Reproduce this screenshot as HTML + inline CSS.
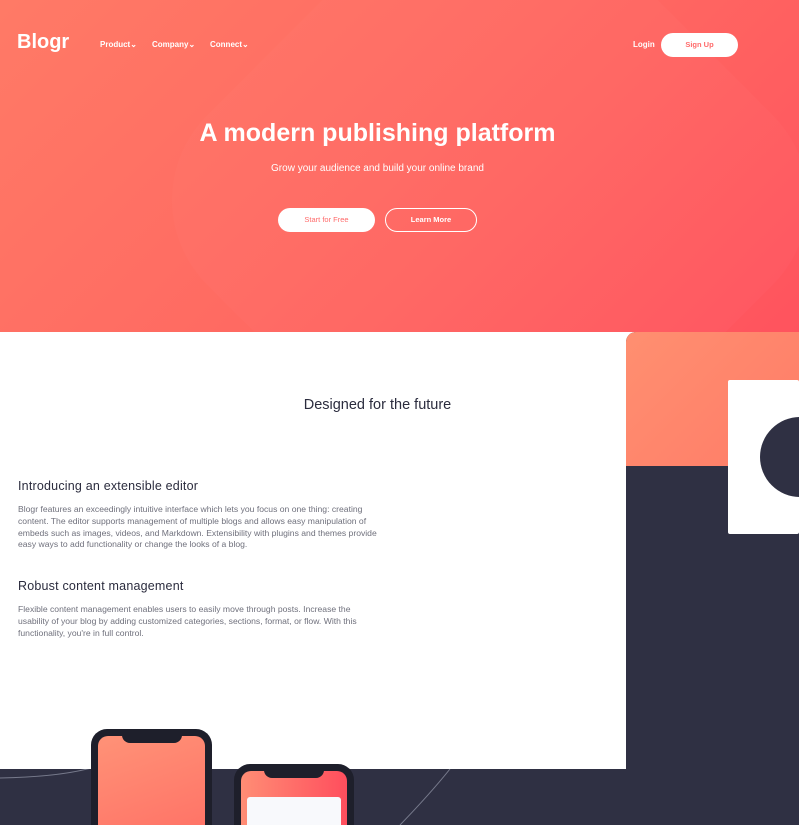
<!DOCTYPE html>
<html><head><meta charset="utf-8"><style>
*{margin:0;padding:0;box-sizing:border-box}
html{width:799px;height:825px;overflow:hidden}
body{width:799px;height:825px;overflow:hidden;position:relative;font-family:"Liberation Sans",sans-serif;background:#fff}
.hero{position:absolute;left:0;top:0;width:799px;height:332px;background:linear-gradient(135deg,#ff7a66 0%,#ff6a62 50%,#ff535e 100%);overflow:hidden}
.hero:before{content:"";position:absolute;left:230px;top:-60px;width:520px;height:520px;border-radius:120px;background:rgba(255,255,255,0.02);transform:rotate(45deg)}
.w{position:absolute;color:#fff;font-weight:bold}
.nav{font-size:8px}
.btn{position:absolute;border-radius:14px;font-size:7.5px;font-weight:bold;text-align:center}
.panel{position:absolute;left:626px;top:332px;width:173px;height:437px;border-top-left-radius:10px;overflow:hidden;background:#2f3043}
.panel .o{position:absolute;left:0;top:0;width:173px;height:134px;background:linear-gradient(135deg,#ff8f70,#ff7c68)}
.card{position:absolute;left:728px;top:380px;width:71px;height:154px;background:#fff;border-radius:2px;overflow:hidden}
.card div{position:absolute;left:32px;top:37px;width:80px;height:80px;border-radius:50%;background:#2f3043}
.bottom{position:absolute;left:0;top:769px;width:799px;height:56px;background:#2f3043}
h3{position:absolute;left:18px;font-size:12.5px;color:#2b2c3e;font-weight:normal;letter-spacing:.2px}
p{position:absolute;left:18px;width:362px;font-size:8.6px;line-height:11.8px;color:#6f707c}
.ph{position:absolute;background:#1e1f2b;border-radius:16px;overflow:hidden}
.ph .s{position:absolute;left:7px;top:7px;right:7px;bottom:-20px;border-radius:10px}
.ph .n{position:absolute;top:6px;width:60px;height:8px;background:#1e1f2b;border-radius:0 0 8px 8px}
.clip{position:absolute;left:0;top:0;width:799px;height:825px;overflow:hidden}
</style></head><body><div class="clip">
<div class="hero">
<div class="w" style="left:17px;top:31px;font-size:20px">Blogr</div>
<div class="w nav" style="left:100px;top:40px">Product⌄</div>
<div class="w nav" style="left:152px;top:40px">Company⌄</div>
<div class="w nav" style="left:210px;top:40px">Connect⌄</div>
<div class="w nav" style="left:633px;top:40px">Login</div>
<div class="btn" style="left:661px;top:33px;width:77px;height:24px;line-height:24px;background:#fff;color:#ff6b6b">Sign Up</div>
<div class="w" style="left:0;width:755px;text-align:center;top:119px;font-size:25px">A modern publishing platform</div>
<div class="w" style="left:0;width:755px;text-align:center;top:163px;font-size:10px;font-weight:normal">Grow your audience and build your online brand</div>
<div class="btn" style="left:278px;top:208px;width:97px;height:24px;line-height:24px;background:#fff;color:#ff6b6b;font-weight:normal">Start for Free</div>
<div class="btn" style="left:385px;top:208px;width:92px;height:24px;line-height:22px;border:1px solid #fff;color:#fff">Learn More</div>
</div>
<div class="panel"><div class="o"></div></div>
<div class="card"><div></div></div>
<div class="bottom"><svg width="799" height="56" style="position:absolute;left:0;top:0"><path d="M0 9 Q60 8 95 -2" stroke="#777a8c" stroke-width="1" fill="none"/><path d="M400 56 Q430 25 450 0" stroke="#777a8c" stroke-width="1" fill="none"/></svg></div>
<div style="position:absolute;left:0;top:397px;width:755px;text-align:center;font-size:14.5px;color:#2b2c3e">Designed for the future</div>
<h3 style="top:479px">Introducing an extensible editor</h3>
<p style="top:504px">Blogr features an exceedingly intuitive interface which lets you focus on one thing: creating content. The editor supports management of multiple blogs and allows easy manipulation of embeds such as images, videos, and Markdown. Extensibility with plugins and themes provide easy ways to add functionality or change the looks of a blog.</p>
<h3 style="top:579px">Robust content management</h3>
<p style="top:604px">Flexible content management enables users to easily move through posts. Increase the usability of your blog by adding customized categories, sections, format, or flow. With this functionality, you're in full control.</p>
<div class="ph" style="left:91px;top:729px;width:121px;height:120px"><div class="s" style="background:linear-gradient(160deg,#ff9277,#ff6a62)"></div><div class="n" style="left:31px"></div></div>
<div class="ph" style="left:234px;top:764px;width:120px;height:100px"><div class="s" style="background:linear-gradient(90deg,#ff8d75,#ff4e5d)"></div><div class="n" style="left:30px"></div><div style="position:absolute;left:13px;top:33px;width:94px;height:40px;background:#f8f9fc;border-radius:3px"></div></div>
</div></body></html>
